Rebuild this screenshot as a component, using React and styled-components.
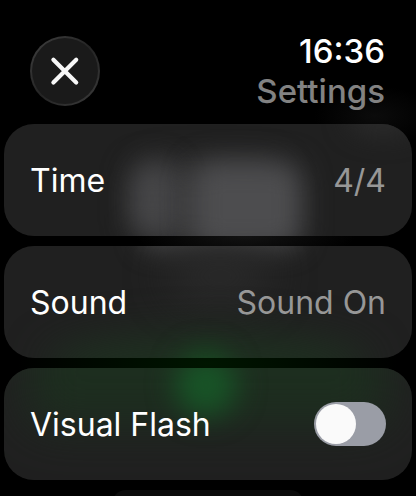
import React, { useState } from "react";
import styled, { createGlobalStyle, css } from "styled-components";

const GlobalStyle = createGlobalStyle`
  * { box-sizing: border-box; }
  body {
    margin: 0;
    background: #000;
    color: #fff;
    font-family: Inter, "Liberation Sans", sans-serif;
    font-size: 32px;
    line-height: 40px;
  }
`;

const Screen = styled.main`
  height: 100vh;
  overflow: hidden;
  display: flex;
  flex-direction: column;
  background:
    radial-gradient(60px 30px at 90% 116px, #0b0b0b, transparent),
    radial-gradient(110px 26px at 59% 236px, #121212, transparent),
    radial-gradient(190px 60px at 50% 364px, #001600, transparent),
    #000;
`;

const Header = styled.header`
  display: flex;
  align-items: center;
  justify-content: space-between;
  padding: 31px 31px 13px 30px;
`;

const CloseButton = styled.button`
  display: grid;
  place-items: center;
  width: 70px;
  height: 70px;
  padding: 0;
  border: 2px solid transparent;
  border-radius: 50%;
  background:
    linear-gradient(#1a1a1a, #1a1a1a) padding-box,
    linear-gradient(135deg, #414141, #242424 50%, #3c3c3c) border-box;
`;

const Heading = styled.div`
  text-align: right;
  font-size: 33px;
  font-weight: 500;
`;

const Clock = styled.time`
  display: block;
`;

const Title = styled.h1`
  margin: 0;
  font: inherit;
  color: #828282;
`;

const List = styled.div`
  display: flex;
  flex-direction: column;
  align-items: center;
  gap: 10px;
  padding: 0 4px;
`;

const cardStyle = css`
  position: relative;
  isolation: isolate;
  overflow: hidden;
  display: flex;
  align-items: center;
  justify-content: space-between;
  width: 100%;
  height: 112px;
  padding: 0 26px;
  border: 0;
  border-radius: 30px;
  background: #202020;
  color: #fff;
  font: inherit;
`;

const CardButton = styled.button`
  ${cardStyle}
`;

const CardLabel = styled.label`
  ${cardStyle}
`;

const Glow = styled.span`
  position: absolute;
  z-index: -1;
  left: ${({ $left }) => $left};
  top: ${({ $top }) => $top}px;
  width: ${({ $width }) => $width};
  height: ${({ $height }) => $height}px;
  border-radius: ${({ $round }) => ($round ? "50%" : "20px")};
  background: ${({ $color }) => $color};
  filter: blur(${({ $blur }) => $blur}px);
`;

const Name = styled.span`
  padding-top: 2px;
`;

const Value = styled.span`
  padding-top: 2px;
  color: #979797;
`;

const Switch = styled.input`
  appearance: none;
  display: flex;
  width: 72px;
  height: 44px;
  margin: 0;
  padding: 2px;
  border-radius: 22px;
  background: #9a9da6;

  &::before {
    content: "";
    width: 40px;
    height: 40px;
    border-radius: 50%;
    background: #fafafa;
  }

  &:checked {
    justify-content: flex-end;
    background: #30d158;
  }
`;

const NextCard = styled.div`
  width: 47%;
  height: 52px;
  border-radius: 14px;
  background: #0b0b0b;
`;

export default function App() {
  const [flash, setFlash] = useState(false);
  return (
    <>
      <GlobalStyle />
      <Screen>
        <Header>
          <CloseButton aria-label="Close">
            <svg width="30" height="30" viewBox="0 0 30 30" fill="none" stroke="#f7f7f7" strokeWidth="4.2" strokeLinecap="round">
              <path d="M3.4 3.7 26.2 26.5M26.2 3.7 3.4 26.5" />
            </svg>
          </CloseButton>
          <Heading>
            <Clock>16:36</Clock>
            <Title>Settings</Title>
          </Heading>
        </Header>
        <List>
          <CardButton>
            <Glow $left="34%" $top={40} $width="34%" $height={84} $blur={16} $color="#363637" />
            <Glow $left="31%" $top={38} $width="11%" $height={74} $blur={14} $color="#474749" />
            <Glow $left="46%" $top={38} $width="27%" $height={88} $blur={14} $color="#4d4d4f" />
            <Glow $left="84%" $top={-24} $width="18%" $height={36} $blur={12} $color="#2b2b2b" $round />
            <Name>Time</Name>
            <Value>4/4</Value>
          </CardButton>
          <CardButton>
            <Glow $left="33%" $top={-30} $width="40%" $height={34} $blur={12} $color="#484849" />
            <Glow $left="40%" $top={0} $width="26%" $height={60} $blur={20} $color="#292929" $round />
            <Glow $left="10%" $top={88} $width="80%" $height={60} $blur={20} $color="#1e3020" $round />
            <Glow $left="43%" $top={104} $width="13%" $height={52} $blur={14} $color="#174d22" $round />
            <Name>Sound</Name>
            <Value>Sound On</Value>
          </CardButton>
          <CardLabel>
            <Glow $left="6%" $top={-50} $width="88%" $height={108} $blur={24} $color="#1d2e1f" />
            <Glow $left="42%" $top={-14} $width="15%" $height={62} $blur={14} $color="#185427" $round />
            <Name>Visual Flash</Name>
            <Switch type="checkbox" role="switch" checked={flash} onChange={(e) => setFlash(e.target.checked)} />
          </CardLabel>
          <NextCard />
        </List>
      </Screen>
    </>
  );
}
